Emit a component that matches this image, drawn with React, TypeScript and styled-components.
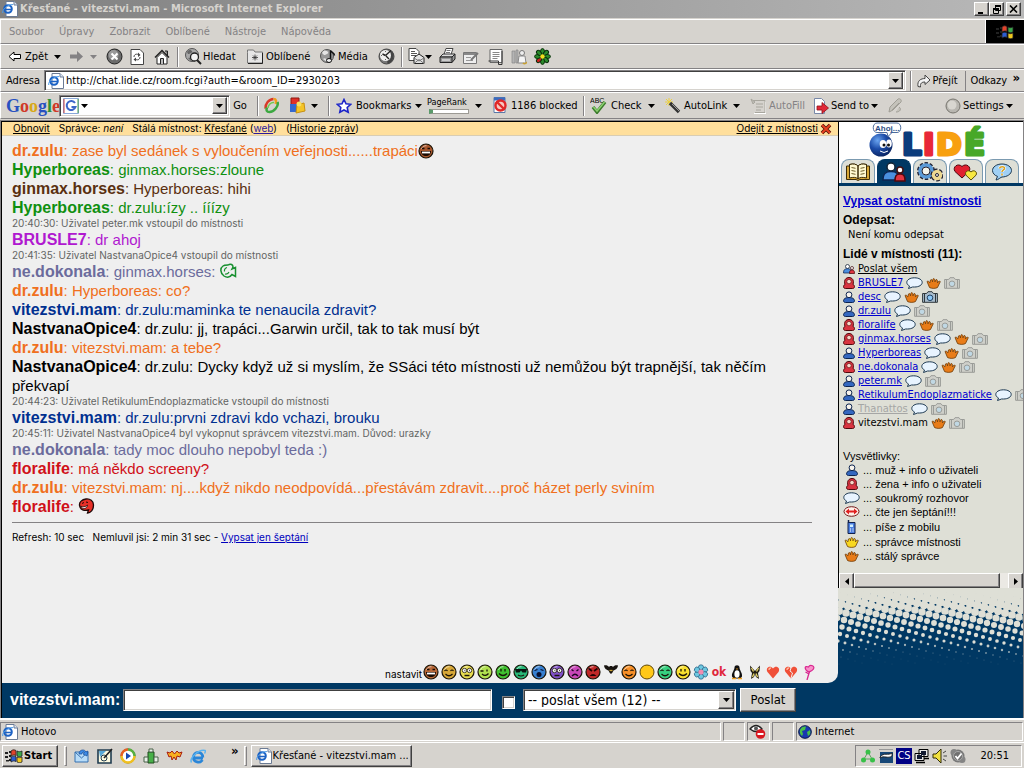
import React from "react";
import styled, { createGlobalStyle, css } from "styled-components";

const UI = `"DejaVu Sans Condensed", "DejaVu Sans", sans-serif`;
const ARIAL = `"Liberation Sans", Arial, sans-serif`;
const SMALL = `Inter, "Liberation Sans", sans-serif`;
const FACE = "#d6d3ce";
const NAVY = "#003863";

const GlobalStyle = createGlobalStyle`
  * { box-sizing: border-box; }
  html, body { margin: 0; padding: 0; background: ${FACE}; }
  body { font-family: ${UI}; font-size: 11px; line-height: 14px; color: #000; }
  button, input, select { font: inherit; color: inherit; border-radius: 0; margin: 0; }
  svg { display: block; flex: none; }
  a { color: inherit; }
`;

const raised = css`
  background: ${FACE};
  border: 1px solid;
  border-color: #fff #404040 #404040 #fff;
  box-shadow: inset -1px -1px 0 #848284;
`;
const sunken = css`
  background: #fff;
  border: 1px solid;
  border-color: #848284 #fff #fff #848284;
  box-shadow: inset 1px 1px 0 #404040, inset -1px -1px 0 ${FACE};
`;

/* ---------- window frame ---------- */
const Page = styled.div`
  min-height: 100vh;
  display: flex;
  flex-direction: column;
  overflow: hidden;
  white-space: nowrap;
`;
const TitleBar = styled.header`
  height: 18px;
  display: flex;
  align-items: center;
  gap: 2px;
  padding: 0 3px 0 2px;
  background: linear-gradient(90deg, #808080, #b8b8b8);
  color: ${FACE};
  font-weight: bold;
`;
const Title = styled.h1`
  margin: 0;
  flex: 1;
  font-size: 11px;
  line-height: 14px;
`;
const CaptionButtons = styled.div`
  display: flex;
`;
const CaptionButton = styled.button<{ $gap?: boolean }>`
  ${raised}
  width: 15px;
  height: 14px;
  padding: 0;
  display: grid;
  place-items: center;
  margin-left: ${(p) => (p.$gap ? 2 : 0)}px;
`;
const Band = styled.div<{ $h: number }>`
  height: ${(p) => p.$h}px;
  display: flex;
  align-items: center;
  border-top: 1px solid #fff;
  border-bottom: 1px solid #848284;
  border-left: 1px solid #fff;
`;
const MenuBar = styled(Band).attrs({ as: "nav" })`
  margin-top: 1px;
`;
const MenuItems = styled.div`
  flex: 1;
  display: flex;
  gap: 15px;
  padding-left: 8px;
`;
const FlatButton = styled.button<{ $w?: number; $muted?: boolean; $gap?: number }>`
  background: none;
  border: 0;
  padding: 0;
  flex: none;
  display: flex;
  align-items: center;
  gap: ${(p) => p.$gap ?? 3}px;
  width: ${(p) => (p.$w ? `${p.$w}px` : "auto")};
  color: ${(p) => (p.$muted ? "#848284" : "#000")};
  white-space: nowrap;
`;
const Throbber = styled.div`
  width: 39px;
  height: 23px;
  background: #000;
  border-left: 1px solid #fff;
  display: grid;
  place-items: center;
`;
const Sep = styled.div<{ $w: number }>`
  flex: none;
  width: ${(p) => p.$w}px;
  height: 20px;
  border-left: 1px solid #848284;
  box-shadow: inset 1px 0 0 #fff;
`;
const ToolBar = styled(Band)`
  padding-left: 7px;
`;
const AddressBar = styled(Band)`
  padding: 0 4px 0 5px;
  gap: 4px;
`;
const AddressBox = styled.div`
  ${sunken}
  flex: 1;
  height: 21px;
  display: flex;
  align-items: center;
  gap: 2px;
  padding: 2px 2px 2px 3px;
`;
const PlainInput = styled.input`
  flex: 1;
  min-width: 0;
  border: 0;
  padding: 0;
  background: transparent;
  outline: 0;
`;
const DropButton = styled.button`
  ${raised}
  width: 15px;
  height: 17px;
  padding: 0;
  display: grid;
  place-items: center;
  flex: none;
`;
const Spacer = styled.div`
  flex: 1;
`;
const Chevron = styled.span<{ $l?: number }>`
  font-size: 13px;
  font-weight: bold;
  line-height: 15px;
  align-self: flex-start;
  margin-left: ${(p) => p.$l ?? 0}px;
`;
const GoogleBar = styled(Band)`
  padding-left: 5px;
  margin-bottom: 1px;
`;
const GoogleLogo = styled.div`
  flex: none;
  width: 53px;
  font: bold 18px/22px "Liberation Serif", serif;
`;
const Tint = styled.span<{ $c: string }>`
  color: ${(p) => p.$c};
`;
const GoogleBox = styled(AddressBox)`
  flex: none;
  width: 171px;
  height: 22px;
`;
const RankBox = styled.div`
  width: 44px;
  font-size: 9px;
  line-height: 9px;
  margin-right: 4px;
  display: flex;
  flex-direction: column;
  gap: 2px;
`;
const RankBar = styled.div`
  margin: 0 2px;
  height: 5px;
  border: 1px solid #9c9a94;
  border-left: 4px solid #5a9a6a;
  background: #fff;
`;

/* ---------- chat ---------- */
const Main = styled.main`
  flex: 1;
  display: grid;
  grid-template-columns: minmax(0, 1fr) 185px;
  background: ${NAVY};
  border: solid #848284;
  border-width: 1px 1px 0 1px;
  box-shadow: inset 1px 1px 0 #000;
  padding: 1px 0 0 1px;
`;
const LeftColumn = styled.div`
  display: flex;
  flex-direction: column;
  min-width: 0;
`;
const ChatPanel = styled.section`
  flex: 1;
  background: #efefef;
  border-bottom-right-radius: 10px;
  display: flex;
  flex-direction: column;
`;
const RoomBar = styled.div`
  height: 14px;
  background: #ffdf9c;
  border-bottom: 1px solid #d8cdb4;
  display: flex;
  align-items: center;
  gap: 9px;
  padding: 0 6px 0 11px;
  font: 10px/13px ${SMALL};
`;
const LeaveLink = styled.a`
  margin-left: auto;
  display: flex;
  align-items: center;
  gap: 2px;
`;
const VisitedLink = styled.a`
  color: #2a1a9c;
`;
const Messages = styled.div`
  padding: 5px 26px 0 10px;
  font: 15px/19px ${ARIAL};
  white-space: normal;
`;
const Message = styled.p<{ $c: string }>`
  margin: 0;
  color: ${(p) => p.$c};
  svg { display: inline-block; vertical-align: -3px; }
`;
const Nick = styled.b`
  font-size: 16px;
  line-height: 18px;
`;
const Notice = styled.p`
  margin: 0;
  font: 10px/13px ${SMALL};
  color: #636563;
`;
const Rule = styled.hr`
  border: 0;
  border-top: 1px solid #848284;
  margin: 6px 0 7px;
`;
const RefreshLine = styled.p`
  margin: 0;
  font: 10px/14px ${SMALL};
  white-space: pre;
`;
const BlueLink = styled.a`
  color: #0000bd;
`;
const SmileyBar = styled.div`
  margin-top: auto;
  display: flex;
  justify-content: flex-end;
  align-items: center;
  padding: 0 20px 2px 0;
`;
const SetLink = styled.a`
  font: 10px/14px ${SMALL};
  text-decoration: none;
  align-self: flex-end;
`;
const SmileyButton = styled.button`
  width: 18px;
  height: 18px;
  padding: 0;
  border: 0;
  background: none;
  display: grid;
  place-items: center;
`;
const OkMark = styled.span`
  font: bold 12px/14px "DejaVu Sans Condensed", sans-serif;
  color: #e0283c;
`;
const SendForm = styled.form`
  height: 35px;
  display: flex;
  align-items: center;
  padding: 0 42px 2px 8px;
`;
const SendLabel = styled.label`
  font: bold 16px/20px ${ARIAL};
  color: #fff;
  margin-right: 3px;
`;
const TextField = styled.input`
  ${sunken}
  flex: 1;
  min-width: 0;
  height: 22px;
  padding: 2px 4px;
  margin-right: 10px;
`;
const CheckBox = styled.input`
  ${sunken}
  appearance: none;
  width: 13px;
  height: 13px;
  margin: 5px 8px 0 0;
`;
const SelectWrap = styled.div`
  position: relative;
  margin-right: 4px;
`;
const SendSelect = styled.select`
  ${sunken}
  appearance: none;
  display: block;
  width: 213px;
  height: 22px;
  padding: 0 18px 0 4px;
  font-size: 14px;
`;
const SelectArrow = styled.span`
  ${raised}
  position: absolute;
  right: 2px;
  top: 2px;
  width: 16px;
  height: 18px;
  display: grid;
  place-items: center;
  pointer-events: none;
`;
const SendButton = styled.button`
  ${raised}
  width: 56px;
  height: 24px;
  padding: 0;
  font-size: 13px;
`;

/* ---------- side panel ---------- */
const Side = styled.aside`
  display: flex;
  flex-direction: column;
  min-width: 0;
`;
const SideFrame = styled.div`
  background: #dedfd6;
  border-left: 1px solid #000;
`;
const SideHead = styled.div`
  background: #fff;
  border-bottom: 3px solid ${NAVY};
`;
const LogoSvg = styled.svg`
  overflow: visible;
`;
const Tabs = styled.nav`
  display: flex;
  gap: 2px;
  padding: 0 0 0 2px;
`;
const Tab = styled.button<{ $active?: boolean }>`
  width: 34px;
  height: 24px;
  padding: 0;
  border: 1px solid ${(p) => (p.$active ? NAVY : "#7b9ab0")};
  border-bottom: 0;
  border-radius: 8px 8px 0 0;
  background: ${(p) => (p.$active ? NAVY : "#dedfd6")};
  display: grid;
  place-items: center;
`;
const SideBody = styled.div`
  padding: 6px 0 10px 4px;
  overflow: hidden;
`;
const RoomsLink = styled.a`
  display: block;
  font: bold 12px/18px ${ARIAL};
  color: #0000ce;
`;
const SideTitle = styled.h2<{ $top: number }>`
  margin: ${(p) => p.$top}px 0 0;
  font: bold 12px/15px ${ARIAL};
`;
const Indented = styled.p`
  margin: 0;
  padding-left: 5px;
`;
const PeopleList = styled.ul`
  margin: 0;
  padding: 0;
  list-style: none;
`;
const PersonRow = styled.li`
  height: 14px;
  display: flex;
  align-items: center;
  gap: 3px;
`;
const PersonName = styled.a<{ $c?: string }>`
  color: ${(p) => p.$c ?? "#0000ce"};
`;
const LegendTitle = styled.p`
  margin: 19px 0 0;
  font: 11px/14px ${ARIAL};
`;
const LegendRow = styled.li<{ $tall?: boolean }>`
  height: ${(p) => (p.$tall ? 16 : 14)}px;
  display: flex;
  align-items: center;
  gap: 3px;
  font: 11px/14px ${ARIAL};
`;
const IconCell = styled.span`
  width: 17px;
  display: flex;
  justify-content: center;
`;
const ScrollTrack = styled.div`
  display: flex;
  background: #ebe9e4;
  height: 15px;
`;
const ScrollThumb = styled.div`
  ${raised}
  width: 146px;
`;
const Halftone = styled.div`
  overflow: hidden;
`;

/* ---------- status and task bars ---------- */
const StatusBar = styled.footer`
  height: 24px;
  border-top: 2px solid #fff;
  padding: 2px 1px 1px 0;
  display: flex;
  gap: 2px;
`;
const StatusCell = styled.div<{ $w?: number }>`
  ${(p) => (p.$w ? `width: ${p.$w}px;` : "flex: 1;")}
  border: 1px solid;
  border-color: #848284 #fff #fff #848284;
  display: flex;
  align-items: center;
  gap: 3px;
  padding-left: 1px;
`;
const TaskBar = styled.footer`
  height: 26px;
  border-top: 1px solid #fff;
  display: flex;
  align-items: center;
  padding: 0 2px 0 2px;
`;
const StartButton = styled.button`
  ${raised}
  width: 56px;
  height: 22px;
  padding: 0 0 0 2px;
  display: flex;
  align-items: center;
  gap: 1px;
  font-weight: bold;
`;
const Grip = styled.div<{ $l: number; $r: number }>`
  width: 3px;
  height: 20px;
  margin: 0 ${(p) => p.$r}px 0 ${(p) => p.$l}px;
  background: ${FACE};
  border: 1px solid;
  border-color: #fff #848284 #848284 #fff;
`;
const Launch = styled.div`
  display: flex;
  gap: 7px;
  flex: none;
`;
const TaskButton = styled(StartButton)`
  width: 161px;
  font-weight: normal;
  padding-left: 4px;
`;
const Tray = styled.div`
  height: 22px;
  width: 167px;
  border: 1px solid;
  border-color: #848284 #fff #fff #848284;
  display: flex;
  align-items: center;
  gap: 2px;
  padding: 0 12px 0 4px;
`;
const Lang = styled.span`
  width: 16px;
  height: 16px;
  background: #000084;
  color: #fff;
  text-align: center;
  line-height: 16px;
`;
const Clock = styled.time`
  margin-left: auto;
`;

/* ---------- icons ---------- */
type IconProps = { w?: number; h?: number; box?: string; children: React.ReactNode };
const Icon = ({ w = 16, h = w, box, children }: IconProps) => (
  <svg width={w} height={h} viewBox={box ?? `0 0 ${w} ${h}`} fill="none" aria-hidden="true">
    {children}
  </svg>
);

const Caret = ({ c = "#000" }: { c?: string }) => (
  <Icon w={7} h={4}><path d="M0 0h7L3.500 4z" fill={c} /></Icon>
);
const IePage = () => (
  <Icon w={16}>
    <path d="M4 .5h8l3.500 3.500v11.500h-11.500z" fill="#fff" stroke="#6b7b94" />
    <path d="M12 .5v3.500h3.500" stroke="#6b7b94" fill="#dce6f4" />
    <circle cx="6" cy="8" r="3.800" stroke="#1c62c4" strokeWidth="2" />
    <path d="M3 8.500h7" stroke="#1c62c4" strokeWidth="1.500" />
    <path d="M.8 12C-.5 9 6 3 11 3.600" stroke="#4a9ae8" />
  </Icon>
);
const IeE = () => (
  <Icon w={16}>
    <path d="M13 10H4.500M12.800 9.500C12.500 2.500 3.500 3 3.500 9.500c0 5 6.500 6 9 2.500" stroke="#2a86d8" strokeWidth="2.800" />
    <path d="M1.500 14.500C-1 10 9 1 15 2.500c1 .5 0 2-.5 3" stroke="#5ab4f0" strokeWidth="1.500" />
  </Icon>
);
const WinFlag = ({ w = 18 }: { w?: number }) => (
  <Icon w={w} h={14} box="0 0 18 14">
    <path d="M0 3h3v2H0zM0 7h3v2H0zM1 11h3v1.500H1zM4 2h2v2H4zM4 6h2v2H4zM4 10h2v2H4z" fill="#222" />
    <path d="M6 2c2-1.500 3-1.500 5-.5V6.500C9 5.500 8 6 6 7z" fill="#e0442c" stroke="#222" strokeWidth=".8" />
    <path d="M12 2c2 1 3 .8 5 0V7c-2 1-3 .8-5 0z" fill="#3ca84c" stroke="#222" strokeWidth=".8" />
    <path d="M6 8c2-1 3-1.200 5-.3V12.500C9 11.500 8 12 6 13z" fill="#2c5cd0" stroke="#222" strokeWidth=".8" />
    <path d="M12 8c2 1 3 .8 5 0V13c-2 1-3 .8-5 0z" fill="#f0c820" stroke="#222" strokeWidth=".8" />
  </Icon>
);

const BackArrow = () => (
  <Icon w={13} h={11}><path d="M12.500 3.500H6V1L1 5.500 6 10V7.500h6.500z" fill="#fff" stroke="#000" /></Icon>
);
const FwdArrow = () => (
  <Icon w={13} h={11}><path d="M0 3.500h7V0l6 5.500L7 11V7.500H0z" fill="#848284" /></Icon>
);
const StopIcon = () => (
  <Icon w={17}>
    <circle cx="8.500" cy="8.500" r="7.500" fill="#6b6b6b" stroke="#222" />
    <circle cx="7.500" cy="7" r="5" fill="#9a9a9a" />
    <path d="M5.500 5.500l6 6M11.500 5.500l-6 6" stroke="#fff" strokeWidth="2" />
  </Icon>
);
const RefreshIcon = () => (
  <Icon w={14} h={16}>
    <path d="M1 .5h9l3.500 3.500v11.500H1z" fill="#fff" stroke="#444" />
    <path d="M4 8c0-3 3-3.500 5-2M10 8c0 3-3 3.500-5 2" stroke="#444" />
    <path d="M8 3.500L10.500 6 8 8zM6 12.500L3.500 10.500 6 8.500z" fill="#444" />
  </Icon>
);
const HomeIcon = () => (
  <Icon w={16}>
    <path d="M11 2h2.500v5" stroke="#222" fill="#888" />
    <path d="M1 8.500L8 1.500l7 7" stroke="#222" strokeWidth="1.500" />
    <path d="M3 8.500v6.500h10V8.500L8 3.500z" fill="#fff" stroke="#222" />
    <path d="M6.500 15V9.500h3V15" stroke="#222" fill="#bbb" />
  </Icon>
);
const SearchIcon = () => (
  <Icon w={17}>
    <circle cx="7" cy="7" r="6.500" fill="#a8a8a8" stroke="#555" />
    <path d="M2 4c2-3 4-2 5-1s-2 3-4 3zM3 10c2-1 3 0 3 3z" fill="#666" />
    <circle cx="9.500" cy="9" r="4" fill="#f4f4f4" stroke="#222" strokeWidth="1.300" />
    <path d="M12 12l4 4" stroke="#222" strokeWidth="2" />
  </Icon>
);
const FolderIcon = () => (
  <Icon w={16} h={15}>
    <path d="M.5 3.500V1h6l1.500 2h7.500v11H.5z" fill="#e6e6e6" stroke="#777" />
    <path d="M15.500 4v10.500H1" stroke="#222" />
    <path d="M8 5.500v6M5 8.500h6M6 6.500l4 4M10 6.500l-4 4" stroke="#333" strokeWidth=".8" />
  </Icon>
);
const MediaIcon = () => (
  <Icon w={17}>
    <circle cx="7" cy="8" r="6.500" fill="#999" stroke="#555" />
    <path d="M2 5c2-4 5-2 6-1s-2 3-4 3zM3 11c2-2 4 0 4 3z" fill="#e4e4e4" />
    <path d="M10.500 12V2.500c1 2 4 2 4 5" stroke="#111" strokeWidth="1.500" />
    <ellipse cx="9" cy="12.500" rx="2.500" ry="2" fill="#eee" stroke="#111" />
  </Icon>
);
const HistoryIcon = () => (
  <Icon w={17}>
    <circle cx="8.500" cy="8.500" r="7.500" fill="#777" stroke="#444" />
    <path d="M8.500 8.500L14 3a7 7 0 0 1 1.500 5.500 7 7 0 0 1-6 7z" fill="#444" />
    <circle cx="7.500" cy="7.500" r="5.500" fill="#efefef" />
    <path d="M7.500 7.500L13 2.500M7.500 7.500L4.500 6M8 8l3 3" stroke="#222" strokeWidth="1.400" />
    <path d="M7.500 3v1M3 7.500h1M7.500 11v1" stroke="#666" />
  </Icon>
);
const MailIcon = () => (
  <Icon w={17}>
    <path d="M1 .5h7l3 3v9H1z" fill="#fff" stroke="#444" />
    <path d="M3 3.500h4M3 5.500h6M3 7.500h5" stroke="#555" />
    <path d="M6 9.500l5-3.500 5 3.500v6H6z" fill="#e4e4e4" stroke="#222" />
    <path d="M6 15.500l5-4 5 4M6 10l5 3 5-3" stroke="#777" />
  </Icon>
);
const PrintIcon = () => (
  <Icon w={17}>
    <path d="M5 6.500L7 .5h7l-2 6z" fill="#fff" stroke="#444" />
    <path d="M7.500 2.500h4M7 4.500h4" stroke="#777" />
    <path d="M1 9l3-3h12l-3 3z" fill="#ddd" stroke="#333" />
    <path d="M1 9h12v5.500H1zM13 9l3-3v5l-3 3.500" fill="#999" stroke="#222" />
    <path d="M3 12h8" stroke="#fff" />
  </Icon>
);
const EditIcon = () => (
  <Icon w={16}>
    <path d="M.5 3.500h13v11H.5z" fill="#eee" stroke="#777" />
    <path d="M1 5h12" stroke="#888" strokeWidth="2" />
    <path d="M3 8.500h5M3 11.500h7" stroke="#999" />
    <path d="M15 4L8 11" stroke="#777" strokeWidth="2" />
  </Icon>
);
const NotesIcon = () => (
  <Icon w={15} h={16}>
    <path d="M2 .5h12v13H2z" fill="#fff" stroke="#666" />
    <path d="M.5 12h10v3.500h3.500V2" stroke="#333" fill="none" />
    <path d="M4.500 3.500h7M4.500 5.500h7M4.500 7.500h7M4.500 9.500h5" stroke="#888" />
  </Icon>
);
const MessengerIcon = () => (
  <Icon w={16}>
    <path d="M1 2h3v12H1zM5 1h2v13H5z" fill="#b4b4b4" stroke="#888" strokeWidth=".7" />
    <circle cx="11" cy="4" r="2.500" fill="#eee" stroke="#777" />
    <path d="M7 14l1-7h6l1 7z" fill="#f4f4f4" stroke="#888" />
    <path d="M12 14c1 1 3 1 4-1" stroke="#c8a030" strokeWidth="1.500" />
  </Icon>
);
const FlowerIcon = () => (
  <Icon w={17}>
    {[0, 45, 90, 135, 180, 225, 270, 315].map((a) => (
      <ellipse key={a} cx="8.500" cy="3.600" rx="2" ry="3" fill={a === 225 ? "#d02020" : "#2c8c2c"} stroke="#0a300a" transform={`rotate(${a} 8.500 8.500)`} />
    ))}
    <circle cx="8.500" cy="8.500" r="2.200" fill="#f0e020" />
  </Icon>
);
const GoIcon = () => (
  <Icon w={14}>
    <path d="M1 12.500c-1-6 3-8 7-8V1l5 5-5 4.500V8C5 8 3 9 3.500 13z" fill="#f4f4f4" stroke="#444" />
  </Icon>
);
const GBox = () => (
  <Icon w={16}>
    <path d="M.5.5h15v15H.5z" fill="#fff" stroke="#8aa8d8" />
    <path d="M12 5A4.500 4.500 0 1 0 12.500 9H8.500" stroke="#3c66c8" strokeWidth="2" />
    <path d="M1 1v14" stroke="#d04040" /><path d="M15 1v14" stroke="#4ca04c" />
  </Icon>
);
const RingIcon = () => (
  <Icon w={17}>
    <path d="M2.500 11.500C2 7 6 2 10.500 2" stroke="#d83a28" strokeWidth="2.500" />
    <path d="M10.500 2c3 0 3 2.500 2 5" stroke="#f0a020" strokeWidth="2.500" />
    <path d="M14.500 5c1.500 4-3.500 10-8 10-3 0-3.500-2-2.500-4.500" stroke="#3ca840" strokeWidth="2.500" />
    <path d="M5 11C5 8 8 5 11 5.500" stroke="#70c850" strokeWidth="1.500" />
  </Icon>
);
const PuzzleIcon = () => (
  <Icon w={17}>
    <path d="M2 1h8v7H2z" fill="#e03028" stroke="#8c1810" />
    <path d="M1 7h7v8H1z" fill="#3468d0" />
    <path d="M8 8l7-2 1 8-9 2z" fill="#f4c428" stroke="#c89010" />
    <circle cx="10" cy="7" r="2.500" fill="#f8e060" />
  </Icon>
);
const StarIcon = () => (
  <Icon w={16}><path d="M8 1.500l2 4.300 4.700.5-3.500 3.200 1 4.800L8 12l-4.200 2.300 1-4.800L1.300 6.300 6 5.800z" fill="#fff" stroke="#1c24c8" strokeWidth="1.600" /></Icon>
);
const BlockIcon = () => (
  <Icon w={17}>
    <path d="M2 .5h11v15H2z" fill="#fff" stroke="#5a78a8" />
    <path d="M2 2h11" stroke="#3c6cc0" strokeWidth="3" />
    <circle cx="8.500" cy="8.500" r="5" stroke="#e02828" strokeWidth="2.400" fill="#f8c8c0" />
    <path d="M5 5l7 7" stroke="#e02828" strokeWidth="2.400" />
  </Icon>
);
const CheckIcon = () => (
  <Icon w={18} h={17}>
    <text x="0" y="6" fontSize="7" fontFamily="Liberation Sans, sans-serif" fill="#000">ABC</text>
    <path d="M3 10l4 5 8-10" stroke="#3c7c2c" strokeWidth="3.500" />
    <path d="M3.500 10L7 14l7.500-9" stroke="#8cd070" strokeWidth="1.500" />
  </Icon>
);
const WandIcon = () => (
  <Icon w={16}>
    <path d="M4 0v8M0 4h8M1 1l6 6M7 1L1 7" stroke="#ecd040" />
    <path d="M5 5l9 9" stroke="#333" strokeWidth="3.400" />
    <path d="M7 6l7 7" stroke="#999" />
  </Icon>
);
const FillIcon = () => (
  <Icon w={16}>
    <path d="M3 2.500h12v12H5" stroke="#a8a69e" /><path d="M1 1l4 3-2 2zM6 6h7M6 9h7M6 12h5" stroke="#a8a69e" fill="#c0beb8" />
    <path d="M4 15.500h12v-12" stroke="#fff" />
  </Icon>
);
const SendToIcon = () => (
  <Icon w={16}>
    <path d="M1.500.5h7l3 3v12h-10z" fill="#fff" stroke="#7888a8" />
    <path d="M4 8h5V4.500l6.500 5.500L9 15.500V12H4z" fill="#e02838" stroke="#901018" strokeWidth=".8" />
  </Icon>
);
const PenIcon = () => (
  <Icon w={16}>
    <path d="M2 14l1-5 8-8c2-1 4 1 3 3l-8 8zM5 12l7-7M12 9c3 2 1 5-3 5" fill="#c4c2ba" stroke="#a09e96" />
  </Icon>
);
const OrbIcon = () => (
  <Icon w={16}><circle cx="8" cy="8" r="7" fill="#b8b6b0" stroke="#77756e" /><circle cx="7" cy="7" r="4.500" fill="#d8d6d0" /></Icon>
);

const ManIcon = () => (
  <Icon w={12} h={12}>
    <path d="M.5 9.500c.5-2 2-3 5.500-3s5 1 5.500 3c0 1.500-1 2-2 2H2.500c-1 0-2-.5-2-2z" fill="#3468c0" stroke="#0c2450" />
    <circle cx="6" cy="3.800" r="2.900" fill="#f8f4ec" stroke="#0c2450" />
  </Icon>
);
const WomanIcon = () => (
  <Icon w={12} h={12}>
    <path d="M.5 9.500c0-1 .5-1.500 1.500-2C.5 3 3 .5 6 .5S11.500 3 10 7.500c1 .5 1.500 1 1.500 2 0 1.500-1 2-2 2H2.500c-1 0-2-.5-2-2z" fill="#d83440" stroke="#50080c" />
    <circle cx="6" cy="4.600" r="2.200" fill="#f8d8c8" stroke="#50080c" strokeWidth=".6" />
  </Icon>
);
const GroupIcon = ({ s = 12 }: { s?: number }) => (
  <Icon w={s} h={(s * 5) / 6} box="0 0 24 20">
    <circle cx="9" cy="5" r="4" fill="#fff" stroke="#123" strokeWidth="1.500" />
    <path d="M1 18c0-7 3-8.500 8-8.500s8 1.500 8 8.500z" fill="#4a90e0" stroke="#0c2450" strokeWidth="1.500" />
    <circle cx="18" cy="8" r="3" fill="#fff" stroke="#411" strokeWidth="1.500" />
    <path d="M13 19c0-5 1-7 5-7s5 2 5 7z" fill="#e03440" stroke="#50080c" strokeWidth="1.500" />
  </Icon>
);
const BubbleIcon = () => (
  <Icon w={17} h={12}>
    <path d="M8.500.8c4.500 0 7.700 2 7.700 4.600S13 10 8.500 10l-2 0L2.500 11.500l1-2.500C1.700 8 .8 6.800.8 5.400.8 2.800 4 .8 8.500.8z" fill="#e8f4ff" stroke="#1c3850" />
  </Icon>
);
const WhisperIcon = () => (
  <Icon w={17} h={12}>
    <ellipse cx="8.500" cy="5.500" rx="7.500" ry="4.800" fill="#fff0e8" stroke="#701818" />
    <path d="M2.500 5.500L6 2.500v2h5v-2l3.500 3-3.500 3v-2H6v2z" fill="#e02020" />
  </Icon>
);
const CrownIcon = ({ c = "#e87c18" }: { c?: string }) => (
  <Icon w={15} h={11}>
    <path d="M1 3.500c1-.8 2.200 0 2.800 1.300L4.500 2c.8-1 1.800-.5 2 1.800C6.800 1.500 7 .6 7.700.6S9 1.500 9 3.800C9.500 1.500 10.500 1 11.200 2l.3 2.800c.6-1.300 1.800-2 2.800-1.200L11.500 9.500c-2 1.200-6 1.200-8 0z" fill={c} stroke="#6a3a08" strokeWidth=".8" />
  </Icon>
);
const CameraIcon = ({ dark }: { dark?: boolean }) => (
  <Icon w={16} h={12}>
    <path d="M.6 2.500h4L6 .7h4l1.400 1.800h4v8.800H.6z" fill={dark ? "#a8bccc" : "#cfd0ca"} stroke={dark ? "#30383c" : "#9a9c98"} />
    <path d="M2.500 3v8M13.500 3v8" stroke={dark ? "#30383c" : "#9a9c98"} />
    <circle cx="8" cy="6.800" r="2.800" fill={dark ? "#8cc8f8" : "#c0d8e4"} stroke={dark ? "#204060" : "#9a9c98"} />
  </Icon>
);
const PhoneIcon = () => (
  <Icon w={9} h={14}>
    <path d="M1.500 0v3" stroke="#10204c" strokeWidth="1.500" />
    <path d="M1 2.500h7v11H1z" fill="#4c80e0" stroke="#10204c" />
    <path d="M3 4.500h3v2.500H3z" fill="#d0f0ff" /><path d="M3 9h1M5.500 9h1M3 11h1M5.500 11h1" stroke="#fff" />
  </Icon>
);

const BookIcon = () => (
  <Icon w={26} h={18}>
    <path d="M1.500 3h3v-1.500c4-1 6.500-.5 8.500 1.500 2-2 4.500-2.500 8.500-1.500V3h3v13.500H15l-2 1-2-1H1.500z" fill="#d8a838" stroke="#3c2c08" />
    <path d="M4.500 1.500c4-1 6.500-.5 8.500 1.500v13c-2-2-4.500-2-8.500-1zM21.500 1.500c-4-1-6.500-.5-8.500 1.500v13c2-2 4.500-2 8.500-1z" fill="#fff8d0" stroke="#3c2c08" />
    <path d="M6.500 4.500l4 .8M6.500 7.500l4 .8M6.500 10.500l4 .8M19.500 4.500l-4 .8M19.500 7.500l-4 .8M19.500 10.500l-4 .8" stroke="#6c5c28" />
  </Icon>
);
const Gear = ({ x, y, r, c }: { x: number; y: number; r: number; c: string }) => (
  <g>
    <circle cx={x} cy={y} r={r + 1} stroke="#223" strokeWidth="4" strokeDasharray="3 1.500" />
    <circle cx={x} cy={y} r={r} stroke={c} strokeWidth="3.500" />
    <circle cx={x} cy={y} r={r - 2} fill="#f4f4ec" stroke="#223" />
  </g>
);
const GearsIcon = () => (
  <Icon w={26} h={20}><Gear x={9} y={9} r={6} c="#5a9ad8" /><Gear x={20} y={13} r={3.500} c="#ecd890" /></Icon>
);
const HeartsIcon = () => (
  <Icon w={26} h={18}>
    <path d="M9 15L2 8.500C-1 4 5-.5 9 3.500c4-4 10 .5 7 5z" fill="#e02030" stroke="#4c0810" />
    <path d="M18 17l-5-4.800c-2-3.500 2.500-6 5-3.200 2.500-2.800 7-.3 5 3.200z" fill="#f8e840" stroke="#5c5008" />
  </Icon>
);
const HelpIcon = () => (
  <Icon w={22} h={18}>
    <path d="M11 1c5.500 0 9.500 3 9.500 6.500S16 14 11 14c-1 0-4 3-6 3l1.500-3.600C3.500 12.500 1.500 10 1.500 7.500 1.500 4 5.500 1 11 1z" fill="#a0d0f4" stroke="#1c3850" />
    <path d="M8.500 5.500c.5-2.500 5.500-2.500 5 0-.3 1.500-2.500 1.500-2.500 3.500M11 10.500v2" stroke="#fff" strokeWidth="2.600" />
    <path d="M8.500 5.500c.5-2.500 5.500-2.500 5 0-.3 1.500-2.500 1.500-2.500 3.500M11 10.500v2" stroke="#d8a020" strokeWidth="1.500" />
  </Icon>
);

const Logo = () => (
  <LogoSvg width="160" height="37" viewBox="0 0 160 37" role="img" aria-label="LIDÉ">
    <defs>
      <radialGradient id="ball" cx="35%" cy="30%" r="75%">
        <stop offset="0" stopColor="#6aa4f0" /><stop offset=".5" stopColor="#1c4ca8" /><stop offset="1" stopColor="#0a2460" />
      </radialGradient>
    </defs>
    <circle cx="42" cy="23" r="11.500" fill="url(#ball)" />
    <ellipse cx="44" cy="22" rx="3.300" ry="4" fill="#fff" /><ellipse cx="50" cy="21.500" rx="2.800" ry="4" fill="#fff" />
    <circle cx="45" cy="23" r="1.500" fill="#111" /><circle cx="49.500" cy="23" r="1.500" fill="#111" />
    <path d="M41 29q4 3 8 0" stroke="#fff" fill="none" />
    <path d="M38 1h20c5 0 5 9.500 0 9.500h-5l-4 4-1-4H38c-5 0-5-9.500 0-9.500z" fill="#fff" stroke="#4c6c9c" />
    <text x="36" y="8.500" fontSize="8" fontWeight="bold" fontFamily="Liberation Sans, sans-serif" fill="#2c4c84">Ahoj...</text>
    <g fontFamily="DejaVu Sans, sans-serif" fontWeight="bold" fontSize="31" strokeWidth="3" strokeLinejoin="round">
      <text x="63" y="33" fill="#0c3c7c" stroke="#0c3c7c">L</text>
      <text x="84" y="33" fill="#e82838" stroke="#e82838">I</text>
      <text x="97" y="33" fill="#f8a010" stroke="#f8a010">D</text>
      <text x="125" y="33" fill="#48a828" stroke="#48a828">É</text>
    </g>
  </LogoSvg>
);

type Mood = "grin" | "smile" | "shock" | "wink" | "cool" | "cry" | "sad" | "angry" | "plain";
const Smiley = ({ c, mood, s = 16 }: { c: string; mood: Mood; s?: number }) => (
  <Icon w={s} box="0 0 16 16">
    <circle cx="8" cy="8" r="7" fill={c} stroke="#1a1408" strokeWidth="1.200" />
    <path d="M3.500 6c1-2.500 3-3.500 5-3.300" stroke="#fff" strokeOpacity=".6" />
    {mood === "grin" && <><path d="M4 5.500h2.500M12 5.500H9.500" stroke="#1a0c04" strokeWidth="1.300" /><path d="M3 8h10c0 3-2 5-5 5s-5-2-5-5z" fill="#1a0c04" /><path d="M4 9.500h8" stroke="#fff" strokeWidth="1.800" /></>}
    {mood === "smile" && <path d="M3.500 7q1.500-2 3 0M9.500 7q1.500-2 3 0M4.500 10q3.500 3.500 7 0" stroke="#1a1408" strokeWidth="1.200" />}
    {mood === "plain" && <path d="M6 5v2.500M10 5v2.500M4 9.500q4 4 8 0" stroke="#1a1408" strokeWidth="1.300" />}
    {mood === "shock" && <><circle cx="5.500" cy="6.500" r="2.200" fill="#fff" stroke="#1a1408" strokeWidth=".8" /><circle cx="10.500" cy="6.500" r="2.200" fill="#fff" stroke="#1a1408" strokeWidth=".8" /><path d="M5.500 6.500h.8M10 6.500h.8M5.500 11.500h5" stroke="#1a1408" strokeWidth="1.300" /></>}
    {mood === "wink" && <path d="M3.500 7h3M10 5.500v2M5 10q3.500 3 6.500-.5" stroke="#1a1408" strokeWidth="1.300" />}
    {mood === "cool" && <><path d="M2 5h12l-1 3.500H9.500L8 6.500 6.500 8.500H3z" fill="#081410" /><path d="M5 11q3 2 6 0" stroke="#1a1408" strokeWidth="1.200" /></>}
    {mood === "cry" && <><path d="M3.500 6.500l3-1M12.500 6.500l-3-1" stroke="#0a1030" strokeWidth="1.300" /><ellipse cx="8" cy="10.500" rx="2.500" ry="2.500" fill="#0a1030" /></>}
    {mood === "sad" && <path d="M4.500 5.500l2 1.500M11.500 5.500l-2 1.500M5 12q3-3.500 6 0" stroke="#1a0820" strokeWidth="1.300" />}
    {mood === "angry" && <><path d="M3.500 4.500l3.500 2.500M12.500 4.500L9 7" stroke="#200404" strokeWidth="1.600" /><path d="M4.500 12q3.500-4 7 0z" fill="#200404" /></>}
  </Icon>
);
const FishIcon = () => (
  <Icon w={17}>
    <path d="M8 2c3-2 5 0 5 2l-1 2 3.500-1.500v9L12 11.500c-2 3-5 3.500-8 1.500C0 10 0 5 3 3c1-1 3-1 5-1z" stroke="#189030" strokeWidth="1.500" />
    <path d="M7 4.500q-3 1-2.500 4M9 9q-1 2.500-4 2" stroke="#189030" strokeWidth="1.200" />
  </Icon>
);
const TongueIcon = () => (
  <Icon w={17}>
    <path d="M8 1c4-.5 7.500 2 7.500 6 0 5-3 8-6 8l1-3c-4 1-8.500 0-9-4.500C1 4 4 1.500 8 1z" fill="#e83028" stroke="#200808" strokeWidth="1.300" />
    <path d="M2.500 8c2 1.500 5 1 7-1-.5 4-5 5-7 1z" fill="#fff" stroke="#200808" strokeWidth=".8" />
    <path d="M4 5.500l2-1M8 4l2 .5" stroke="#200808" />
  </Icon>
);
const BugIcon = () => (
  <Icon w={16}><path d="M1 1.500c2-.5 4 0 5 1.500l1-1h2l1 1c1-1.500 3-2 5-1.500C14.500 5 12 6 10.500 6.500L9.500 8.500 8 10 6.500 8.500l-1-2C4 6 1.500 5 1 1.500z" fill="#181410" /><path d="M6.500 6.500h3" stroke="#c8a030" strokeWidth="1.300" /></Icon>
);
const PetalIcon = () => (
  <Icon w={16}>
    {[0, 60, 120, 180, 240, 300].map((a) => <circle key={a} cx="8" cy="3.400" r="2.600" fill="#6cc8e0" stroke="#30688c" strokeWidth=".8" transform={`rotate(${a} 8 8)`} />)}
    <circle cx="8" cy="8" r="2.600" fill="#f08cb0" />
  </Icon>
);
const PenguinIcon = () => (
  <Icon w={16}>
    <path d="M5.500 3.500c0-3 5-3 5 0 0 3 3 5 2.500 9l-1.500 2h-7L3 12.500C2.500 8.500 5.500 6.500 5.500 3.500z" fill="#101010" />
    <ellipse cx="8" cy="10" rx="2.600" ry="3.800" fill="#fff" /><path d="M7 4.500h2l-1 1.500z" fill="#f0a020" />
    <path d="M3 14.500h4M9 14.500h4" stroke="#f0a020" strokeWidth="1.500" />
  </Icon>
);
const ButterflyIcon = () => (
  <Icon w={16}>
    <path d="M8 7L3 1.500 3.500 7 5 9l-1 6L7 13l1-3 1 3 3 2L11 9l1.500-2L13 1.500z" fill="#201c10" />
    <path d="M4.500 4L6.500 7.500M11.500 4L9.500 7.500M5.500 13L7 9.500M10.500 13L9 9.500" stroke="#e0d068" strokeWidth="1.400" />
  </Icon>
);
const HeartIcon = ({ broken }: { broken?: boolean }) => (
  <Icon w={16}>
    <path d="M8 14.500L2.500 8C0 4 5 .5 8 4.500c3-4 8-.5 5.500 3.500z" fill="#f05038" />
    <path d="M4 6q0-2 2-2" stroke="#ffb8a0" strokeWidth="1.300" />
    {broken && <path d="M8 4L7 7l2.500 2L8 14" stroke="#efefef" />}
  </Icon>
);
const RoseIcon = () => (
  <Icon w={16}><path d="M8 8C3 6 3 1 7.500 3 9 0 15 2 12 5.500 11 7 9 7.500 8 8z" stroke="#d82890" strokeWidth="1.200" fill="#f890c8" /><path d="M8.500 7.500L6 16M8 10L4.500 8" stroke="#d82890" strokeWidth="1.300" /></Icon>
);
const CrossIcon = () => (
  <Icon w={12} h={12}><path d="M2 2l8 8M10 2l-8 8" stroke="#501008" strokeWidth="3.600" /><path d="M2 2l8 8M10 2l-8 8" stroke="#e84020" strokeWidth="2" /></Icon>
);
const EyeIcon = () => (
  <Icon w={17}>
    <path d="M1 6q6-7 12 0-6 5-12 0z" fill="#fff" stroke="#222" strokeWidth="1.300" /><circle cx="7" cy="5.500" r="2" fill="#555" />
    <circle cx="11.500" cy="11" r="4.800" fill="#d81820" /><path d="M8.500 11h6" stroke="#fff" strokeWidth="2" />
  </Icon>
);
const GlobeIcon = () => (
  <Icon w={14}><circle cx="7" cy="7" r="6.300" fill="#1838b0" stroke="#081848" /><path d="M2 5c1-3 4-4 6-3.500L7 5 4 6l1 3-1 2C2 9.500 1.500 7 2 5zM9 7l3-2c1 3 0 5-2 6z" fill="#48c048" /></Icon>
);
const LaunchIcons = () => (
  <Launch>
    <Icon w={16}><path d="M1 4h13v10H1z" fill="#b8dcf8" stroke="#3470b0" /><path d="M1 4l6.500 6L14 4" stroke="#3470b0" /><path d="M5 6c0-5 6-5 7-2l2-1-1 5-4-2 1.500-1C10 3 8 4 8 6z" fill="#3c8ce8" stroke="#184c98" strokeWidth=".7" /></Icon>
    <Icon w={16}><path d="M1 2h13v13H1z" fill="#fffbe0" stroke="#203c50" strokeWidth="1.600" /><path d="M2 3h7L3 9z" fill="#58a8d8" /><circle cx="7" cy="10" r="3" stroke="#203c50" /><path d="M15 1L7 10" stroke="#202020" strokeWidth="1.600" /></Icon>
    <Icon w={16}><circle cx="8" cy="8" r="7" fill="#fff" stroke="#345" /><path d="M8 1.500A6.500 6.500 0 0 0 1.500 8" stroke="#e86020" strokeWidth="2.500" /><path d="M8 1.500A6.500 6.500 0 0 1 14.500 8" stroke="#58b040" strokeWidth="2.500" /><path d="M1.500 8A6.500 6.500 0 0 0 14.500 8" stroke="#f0c020" strokeWidth="2.500" /><path d="M6 4.500l5 3.500-5 3.500z" fill="#1848b0" /></Icon>
    <Icon w={16}><path d="M5 4h6v11H5z" fill="#48b048" stroke="#1c4c1c" /><path d="M6 1h4v3H6zM1 9h4v5H1zM11 9h4v5h-4z" fill="#e8f0e8" stroke="#486048" /></Icon>
    <Icon w={17} h={16}><path d="M1 4l3 1 2-2 2.500 3L11 3l2 2 3-1-2 5-3-1-1 4-2-3-2 3-1-4-2 1z" fill="#f8b020" stroke="#a81c10" /></Icon>
    <IeE />
  </Launch>
);
const TrayIcons = () => (
  <>
    <Icon w={16}><path d="M8 4L4 11h8z" stroke="#60a060" /><circle cx="8" cy="4" r="2.500" fill="#38c048" /><circle cx="3.500" cy="12" r="2.500" fill="#38c048" /><circle cx="12.500" cy="12" r="2.500" fill="#38c048" /></Icon>
    <Icon w={16}><path d="M1 1.500h14" stroke="#999" /><path d="M2 4h13v11H2z" fill="#184878" /><path d="M2 9c4-5 8-1 12-4v3C10 11 6 7 2 10z" fill="#fff" stroke="#111" strokeWidth=".8" /></Icon>
    <Lang>CS</Lang>
    <Icon w={16}><path d="M5 1.500h9v7H5zM1 5.500h9v7H1z" fill="#e8e8e8" stroke="#000" /><path d="M7 3h5v4H7zM3 7h5v4H3z" fill="#101830" /><path d="M2 14.500h9M10 10.500h5" stroke="#000" strokeWidth="1.600" /></Icon>
    <Icon w={16}><path d="M1 6h3l5-5v14L4 10H1z" fill="#f0e040" stroke="#302c08" /><path d="M11 5l3-2M11.500 8H15M11 11l3 2" stroke="#444" /></Icon>
    <Icon w={16}><circle cx="8" cy="8" r="6.500" fill="#787878" /><circle cx="4" cy="4.500" r="3.500" fill="#848484" /><circle cx="12" cy="11.500" r="3.500" fill="#848484" /><circle cx="8" cy="8" r="4.500" fill="#707070" stroke="#a8a8a8" /><path d="M5.500 8l2 2.500 4-5" stroke="#fff" strokeWidth="1.800" /></Icon>
  </>
);

/* Light dots on a tilted grid, shrinking towards the bottom. */
const DotField = () => {
  const dots: React.ReactNode[] = [];
  for (let i = -5; i < 36; i++) {
    for (let j = -12; j < 14; j++) {
      const x = i * 7 + j * -2;
      const y = i * 2 + j * 7;
      if (x < -6 || x > 192 || y < -6 || y > 76) continue;
      const wave = y + 3 * Math.sin(x / 40);
      const r = Math.max(0.6, 5.700 - wave * 0.076);
      const fade = wave > 54 ? Math.max(0.1, 1 - (wave - 54) / 22) : 1;
      dots.push(<circle key={`${i}.${j}`} cx={x} cy={y} r={r} fill="#dedfd6" opacity={fade} />);
    }
  }
  return <svg width="100%" height="80" viewBox="0 0 185 80" preserveAspectRatio="xMinYMin slice" aria-hidden="true">{dots}</svg>;
};

/* ---------- data ---------- */
const ORANGE = "#f07020", GREEN = "#109010", BROWN = "#5a3010", MAGENTA = "#b018d0", SLATE = "#6b6b9c", BLUE = "#003090", RED = "#d01018", BLACK = "#000";
type Line = { who?: string; c?: string; text: string; icon?: React.ReactNode };
const log: Line[] = [
  { who: "dr.zulu", c: ORANGE, text: "zase byl sedánek s vyloučením veřejnosti......trapáci", icon: <Smiley c="#a8562c" mood="grin" /> },
  { who: "Hyperboreas", c: GREEN, text: "ginmax.horses:zloune" },
  { who: "ginmax.horses", c: BROWN, text: "Hyperboreas: hihi" },
  { who: "Hyperboreas", c: GREEN, text: "dr.zulu:ízy .. ííízy" },
  { text: "20:40:30: Uživatel peter.mk vstoupil do místnosti" },
  { who: "BRUSLE7", c: MAGENTA, text: "dr ahoj" },
  { text: "20:41:35: Uživatel NastvanaOpice4 vstoupil do místnosti" },
  { who: "ne.dokonala", c: SLATE, text: "ginmax.horses: ", icon: <FishIcon /> },
  { who: "dr.zulu", c: ORANGE, text: "Hyperboreas: co?" },
  { who: "vitezstvi.mam", c: BLUE, text: "dr.zulu:maminka te nenaucila zdravit?" },
  { who: "NastvanaOpice4", c: BLACK, text: "dr.zulu: jj, trapáci...Garwin určil, tak to tak musí být" },
  { who: "dr.zulu", c: ORANGE, text: "vitezstvi.mam: a tebe?" },
  { who: "NastvanaOpice4", c: BLACK, text: "dr.zulu: Dycky když už si myslím, že SSáci této místnosti už nemůžou být trapnější, tak něčím překvapí" },
  { text: "20:44:23: Uživatel RetikulumEndoplazmaticke vstoupil do místnosti" },
  { who: "vitezstvi.mam", c: BLUE, text: "dr.zulu:prvni zdravi kdo vchazi, brouku" },
  { text: "20:45:11: Uživatel NastvanaOpice4 byl vykopnut správcem vitezstvi.mam. Důvod: urazky" },
  { who: "ne.dokonala", c: SLATE, text: "tady moc dlouho nepobyl teda :)" },
  { who: "floralife", c: RED, text: "má někdo screeny?" },
  { who: "dr.zulu", c: ORANGE, text: "vitezstvi.mam: nj....když nikdo neodpovídá...přestávám zdravit....proč házet perly sviním" },
  { who: "floralife", c: RED, text: "", icon: <TongueIcon /> },
];
type Person = { name: string; f?: boolean; crown?: boolean; cam?: "dark" | "pale"; away?: boolean; self?: boolean };
const people: Person[] = [
  { name: "BRUSLE7", f: true, crown: true },
  { name: "desc", crown: true, cam: "dark" },
  { name: "dr.zulu" },
  { name: "floralife", f: true, crown: true },
  { name: "ginmax.horses", f: true, crown: true },
  { name: "Hyperboreas", crown: true },
  { name: "ne.dokonala", f: true, crown: true },
  { name: "peter.mk" },
  { name: "RetikulumEndoplazmaticke" },
  { name: "Thanattos", away: true },
  { name: "vitezstvi.mam", f: true, crown: true, self: true },
];
const legend: [React.ReactNode, string, boolean?][] = [
  [<ManIcon />, "... muž + info o uživateli"],
  [<WomanIcon />, "... žena + info o uživateli"],
  [<BubbleIcon />, "... soukromý rozhovor"],
  [<WhisperIcon />, "... čte jen šeptání!!!"],
  [<PhoneIcon />, "... píše z mobilu", true],
  [<CrownIcon c="#f8d820" />, "... správce místnosti"],
  [<CrownIcon />, "... stálý správce"],
];
const smileys: React.ReactNode[] = [
  <Smiley c="#b86838" mood="grin" />, <Smiley c="#d8a838" mood="smile" />, <Smiley c="#e8dc50" mood="shock" />,
  <Smiley c="#b0e050" mood="wink" />, <Smiley c="#40c030" mood="plain" />, <Smiley c="#28b878" mood="cool" />,
  <Smiley c="#3880d0" mood="cry" />, <Smiley c="#8050c8" mood="shock" />, <Smiley c="#c848b8" mood="sad" />,
  <Smiley c="#c02828" mood="angry" />, <BugIcon />, <Smiley c="#f89028" mood="smile" />,
  <Icon w={16}><circle cx="8" cy="8" r="7" fill="#ffc818" stroke="#604808" /></Icon>,
  <Smiley c="#38d080" mood="smile" />, <Smiley c="#f8e030" mood="plain" />, <PetalIcon />, <OkMark>ok</OkMark>,
  <PenguinIcon />, <ButterflyIcon />, <HeartIcon />, <HeartIcon broken />, <RoseIcon />,
];

export default function App() {
  return (
    <Page>
      <GlobalStyle />
      <TitleBar>
        <IePage />
        <Title>Křesťané - vitezstvi.mam - Microsoft Internet Explorer</Title>
        <CaptionButtons>
          <CaptionButton aria-label="Minimalizovat"><Icon w={9} h={9}><path d="M1 7h5v2H1z" fill="#000" /></Icon></CaptionButton>
          <CaptionButton aria-label="Obnovit okno"><Icon w={9} h={9}><path d="M3.500 1.500h5v4h-5zM1.500 4.500h5v4h-5z" stroke="#000" fill={FACE} /><path d="M3 1h6M1 4h6" stroke="#000" strokeWidth="2" /></Icon></CaptionButton>
          <CaptionButton $gap aria-label="Zavřít"><Icon w={9} h={8}><path d="M1 .5l7 7M8 .5l-7 7" stroke="#000" strokeWidth="1.600" /></Icon></CaptionButton>
        </CaptionButtons>
      </TitleBar>

      <MenuBar $h={25}>
        <MenuItems>
          {["Soubor", "Úpravy", "Zobrazit", "Oblíbené", "Nástroje", "Nápověda"].map((m) => <FlatButton key={m} $muted>{m}</FlatButton>)}
        </MenuItems>
        <Throbber><WinFlag w={20} /></Throbber>
      </MenuBar>

      <ToolBar $h={25}>
        <FlatButton $w={46} $gap={4}><BackArrow />Zpět</FlatButton>
        <FlatButton $w={16} aria-label="Historie zpět"><Caret /></FlatButton>
        <FlatButton $w={20} aria-label="Vpřed"><FwdArrow /></FlatButton>
        <FlatButton $w={16} aria-label="Historie vpřed"><Caret c="#848284" /></FlatButton>
        <FlatButton $w={24} aria-label="Zastavit"><StopIcon /></FlatButton>
        <FlatButton $w={24} aria-label="Aktualizovat"><RefreshIcon /></FlatButton>
        <FlatButton $w={23} aria-label="Domů"><HomeIcon /></FlatButton>
        <Sep $w={8} />
        <FlatButton $w={62} $gap={1}><SearchIcon />Hledat</FlatButton>
        <FlatButton $w={73}><FolderIcon />Oblíbené</FlatButton>
        <FlatButton $w={58} $gap={1}><MediaIcon />Média</FlatButton>
        <FlatButton $w={23} aria-label="Historie"><HistoryIcon /></FlatButton>
        <Sep $w={7} />
        <FlatButton $w={31} $gap={0} aria-label="Pošta"><MailIcon /><Caret /></FlatButton>
        <FlatButton $w={24} aria-label="Tisk"><PrintIcon /></FlatButton>
        <FlatButton $w={25} aria-label="Upravit"><EditIcon /></FlatButton>
        <FlatButton $w={23} aria-label="Diskuse"><NotesIcon /></FlatButton>
        <FlatButton $w={23} aria-label="Messenger"><MessengerIcon /></FlatButton>
        <FlatButton aria-label="ICQ"><FlowerIcon /></FlatButton>
      </ToolBar>

      <AddressBar $h={23}>
        <label htmlFor="address">Adresa</label>
        <AddressBox>
          <IePage />
          <PlainInput id="address" defaultValue="http://chat.lide.cz/room.fcgi?auth=&room_ID=2930203" />
          <DropButton aria-label="Seznam adres"><Caret /></DropButton>
        </AddressBox>
        <Sep $w={3} />
        <FlatButton $w={44} $gap={1}><GoIcon />Přejít</FlatButton>
        <Sep $w={1} />
        <FlatButton $w={38}>Odkazy</FlatButton>
        <Chevron>»</Chevron>
      </AddressBar>

      <GoogleBar $h={27}>
        <GoogleLogo>
          <Tint $c="#2850c0">G</Tint><Tint $c="#d03828">o</Tint><Tint $c="#d8a818">o</Tint><Tint $c="#2850c0">g</Tint><Tint $c="#289038">l</Tint><Tint $c="#d03828">e</Tint>
        </GoogleLogo>
        <GoogleBox>
          <GBox /><Caret />
          <PlainInput aria-label="Google" />
          <DropButton aria-label="Historie hledání"><Caret /></DropButton>
        </GoogleBox>
        <FlatButton $w={27}>&nbsp;Go</FlatButton>
        <Sep $w={6} />
        <FlatButton $w={26} aria-label="Hledat"><RingIcon /></FlatButton>
        <FlatButton $w={39} $gap={5} aria-label="Doplňky"><PuzzleIcon /><Caret /></FlatButton>
        <Sep $w={8} />
        <FlatButton $w={91} $gap={4}><StarIcon />Bookmarks<Caret /></FlatButton>
        <RankBox>PageRank<RankBar /></RankBox>
        <FlatButton $w={17} aria-label="PageRank"><Caret /></FlatButton>
        <FlatButton $w={91} $gap={2}><BlockIcon />1186 blocked</FlatButton>
        <Sep $w={7} />
        <FlatButton $w={75} $gap={3}><CheckIcon />Check&nbsp;<Caret /></FlatButton>
        <FlatButton $w={85} $gap={3}><WandIcon />AutoLink&nbsp;<Caret /></FlatButton>
        <FlatButton $w={63} $muted><FillIcon />AutoFill</FlatButton>
        <FlatButton $w={74} $gap={2}><SendToIcon />Send to<Caret /></FlatButton>
        <FlatButton aria-label="Zvýraznit"><PenIcon /></FlatButton>
        <Spacer />
        <FlatButton $w={79} $gap={2}><OrbIcon />Settings<Caret /></FlatButton>
      </GoogleBar>

      <Main>
        <LeftColumn>
          <ChatPanel>
            <RoomBar>
              <a href="#obnovit">Obnovit</a>
              <span>Správce: <i>není</i></span>
              <span>Stálá místnost: <a href="#mistnost">Křesťané</a> (<VisitedLink href="#web">web</VisitedLink>)</span>
              <span>(<a href="#historie">Historie zpráv</a>)</span>
              <LeaveLink href="#odejit">Odejít z místnosti<CrossIcon /></LeaveLink>
            </RoomBar>
            <Messages>
              {log.map((l, i) =>
                l.who ? (
                  <Message key={i} $c={l.c!}><Nick>{l.who}</Nick>: {l.text}{l.icon}</Message>
                ) : (
                  <Notice key={i}>{l.text}</Notice>
                )
              )}
              <Rule />
              <RefreshLine>Refresh: 10 sec{"   "}Nemluvil jsi: 2 min 31 sec - <BlueLink href="#septani">Vypsat jen šeptání</BlueLink></RefreshLine>
            </Messages>
            <SmileyBar>
              <SetLink href="#nastavit">nastavit</SetLink>
              {smileys.map((s, i) => <SmileyButton key={i} type="button" aria-label={`Smajlík ${i + 1}`}>{s}</SmileyButton>)}
            </SmileyBar>
          </ChatPanel>
          <SendForm onSubmit={(e) => e.preventDefault()}>
            <SendLabel htmlFor="text">vitezstvi.mam:</SendLabel>
            <TextField id="text" />
            <CheckBox type="checkbox" aria-label="Šeptat" />
            <SelectWrap>
              <SendSelect aria-label="Příjemce"><option>-- poslat všem (12) --</option></SendSelect>
              <SelectArrow><Caret /></SelectArrow>
            </SelectWrap>
            <SendButton>Poslat</SendButton>
          </SendForm>
        </LeftColumn>

        <Side>
          <SideFrame>
            <SideHead>
              <Logo />
              <Tabs>
                <Tab aria-label="Kniha"><BookIcon /></Tab>
                <Tab $active aria-label="Lidé"><GroupIcon s={24} /></Tab>
                <Tab aria-label="Nastavení"><GearsIcon /></Tab>
                <Tab aria-label="Seznamka"><HeartsIcon /></Tab>
                <Tab aria-label="Nápověda"><HelpIcon /></Tab>
              </Tabs>
            </SideHead>
            <SideBody>
              <RoomsLink href="#mistnosti">Vypsat ostatní místnosti</RoomsLink>
              <SideTitle $top={3}>Odepsat:</SideTitle>
              <Indented>Není komu odepsat</Indented>
              <SideTitle $top={5}>Lidé v místnosti (11):</SideTitle>
              <PeopleList>
                <PersonRow><GroupIcon /><PersonName href="#vsem" $c="#000">Poslat všem</PersonName></PersonRow>
                {people.map((p) => (
                  <PersonRow key={p.name}>
                    {p.f ? <WomanIcon /> : <ManIcon />}
                    {p.self ? <span>{p.name}</span> : <PersonName href={`#${p.name}`} $c={p.away ? "#a5a6a5" : undefined}>{p.name}</PersonName>}
                    {!p.self && <BubbleIcon />}
                    {p.crown && <CrownIcon />}
                    <CameraIcon dark={p.cam === "dark"} />
                  </PersonRow>
                ))}
              </PeopleList>
              <LegendTitle>Vysvětlivky:</LegendTitle>
              <PeopleList>
                {legend.map(([icon, text, tall]) => (
                  <LegendRow key={text} $tall={tall}><IconCell>{icon}</IconCell>{text}</LegendRow>
                ))}
              </PeopleList>
            </SideBody>
            <ScrollTrack>
              <DropButton aria-label="Posunout vlevo"><Icon w={4} h={7}><path d="M4 0v7L0 3.500z" fill="#000" /></Icon></DropButton>
              <ScrollThumb />
              <Spacer />
              <DropButton aria-label="Posunout vpravo"><Icon w={4} h={7}><path d="M0 0v7l4-3.500z" fill="#000" /></Icon></DropButton>
            </ScrollTrack>
          </SideFrame>
          <Halftone><DotField /></Halftone>
        </Side>
      </Main>

      <StatusBar>
        <StatusCell><IePage />Hotovo</StatusCell>
        <StatusCell $w={22} />
        <StatusCell $w={23}><EyeIcon /></StatusCell>
        <StatusCell $w={22} />
        <StatusCell $w={227}><GlobeIcon />Internet</StatusCell>
      </StatusBar>

      <TaskBar>
        <StartButton><WinFlag w={18} />Start</StartButton>
        <Grip $l={6} $r={7} />
        <LaunchIcons />
        <Chevron $l={25}>»</Chevron>
        <Grip $l={5} $r={4} />
        <TaskButton><IePage />Křesťané - vitezstvi.mam ...</TaskButton>
        <Spacer />
        <Tray><TrayIcons /><Clock>20:51</Clock></Tray>
      </TaskBar>
    </Page>
  );
}
